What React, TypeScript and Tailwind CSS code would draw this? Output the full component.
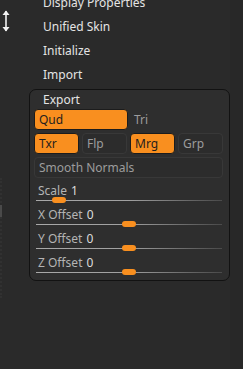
import React from "react";

const menu = ["Display Properties", "Unified Skin", "Initialize", "Import"];

const sliders = [
  { label: "Scale", value: "1", knob: 16 },
  { label: "X Offset", value: "0", knob: 86 },
  { label: "Y Offset", value: "0", knob: 86 },
  { label: "Z Offset", value: "0", knob: 86 },
];

function Btn({ label, on, className = "" }: { label: string; on?: boolean; className?: string }) {
  return (
    <div
      className={
        "h-[21px] rounded-[4px] border flex items-center pl-[4px] text-[12px] leading-none " +
        (on
          ? "bg-[#f98f1f] border-[#1c1c1c] text-[#1e1e1e]"
          : "bg-[#2c2c2c] border-[#383838] text-[#9c9c9c]") +
        " " +
        className
      }
    >
      {label}
    </div>
  );
}

export default function App() {
  return (
    <div
      className="w-[243px] h-[369px] bg-[#2a2a2a] flex overflow-hidden"
      style={{ fontFamily: '"Noto Sans", "Open Sans", sans-serif' }}
    >
      {/* left rail */}
      <div className="w-[29px] flex flex-col shrink-0">
        <svg width="10" height="24" viewBox="0 0 10 24" className="ml-[1px] mt-[9px]">
          <path d="M5 2 V22" stroke="#f2f2f2" strokeWidth="1.6" />
          <path d="M1.5 6 L5 1.5 L8.5 6 Z" fill="#f2f2f2" />
          <path d="M1.5 18 L5 22.5 L8.5 18 Z" fill="#f2f2f2" />
        </svg>
        <div className="mt-[145px] w-[2px] h-[120px] border-l-2 border-dotted border-[#313131] flex flex-col">
          <div className="mt-[27px] h-[12px] w-[2px] -ml-[2px] bg-[#4a4a4a]" />
        </div>
      </div>

      {/* main column */}
      <div className="w-[201px] flex flex-col shrink-0">
        <div className="-mt-[9px] flex flex-col">
          {menu.map((m) => (
            <div key={m} className="h-[24px] flex items-center pl-[14px] text-[12px] text-[#e4e4e4]">
              {m}
            </div>
          ))}
        </div>

        <div className="mt-[2px] bg-[#2e2e2e] border border-[#121212] rounded-[7px] pl-[4px] pr-[5px] pb-[1px]">
          <div className="h-[19px] flex items-center pl-[9px] text-[12px] text-[#e4e4e4]">Export</div>

          <div className="flex gap-[3px]">
            <Btn label="Qud" on className="w-[94px]" />
            <div className="h-[21px] flex items-center pl-[3px] text-[12px] text-[#9c9c9c]">Tri</div>
          </div>

          <div className="mt-[3px] flex gap-[3px]">
            <Btn label="Txr" on className="w-[45px]" />
            <Btn label="Flp" className="w-[45px]" />
            <Btn label="Mrg" on className="w-[45px]" />
            <Btn label="Grp" className="w-[45px]" />
          </div>

          <Btn label="Smooth Normals" className="mt-[3px] h-[20px] w-[189px]" />

          <div className="mt-[5px] flex flex-col">
            {sliders.map((s) => (
              <div key={s.label} className="h-[24px] flex flex-col">
                <div className="h-[16px] flex items-center pl-[4px] text-[12px] text-[#b4b4b4]">
                  {s.label}
                  <span className="ml-[4px] text-[#dcdcdc]">{s.value}</span>
                </div>
                <div className="relative h-[8px] ml-[2px] w-[186px]">
                  <div className="absolute top-[1px] left-0 right-0 h-[1px] bg-gradient-to-r from-[#a8a8a8] via-[#a0a0a0] to-[#4a4a4a]" />
                  <div
                    className="absolute top-[-2px] w-[14px] h-[6px] rounded-full bg-[#f98f1f]"
                    style={{ left: s.knob }}
                  />
                </div>
              </div>
            ))}
          </div>
        </div>
      </div>
      <div className="flex-1 bg-[#282828]" />
    </div>
  );
}
